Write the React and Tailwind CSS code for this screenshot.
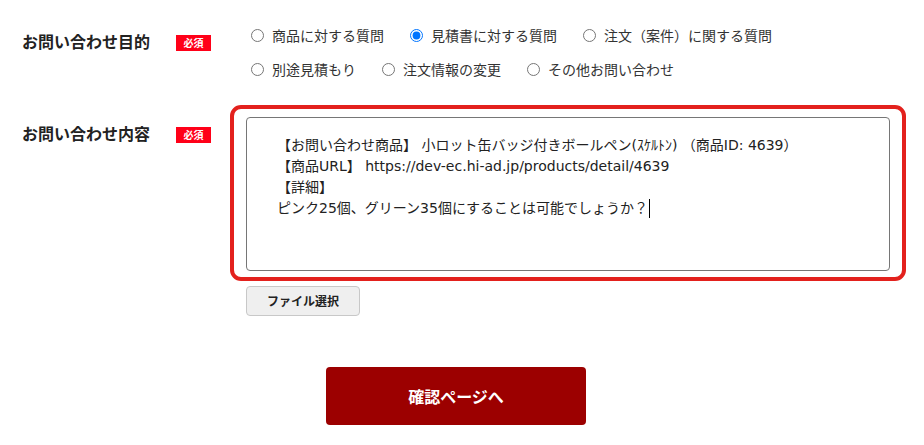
import React from "react";

const font = { fontFamily: '"Noto Sans CJK JP", "Noto Sans", sans-serif' };
const mixFont = { fontFamily: '"DejaVu Sans", "Noto Sans CJK JP", sans-serif' };

function Radio({ label, checked }) {
  return (
    <label className="flex items-center h-[20px]">
      <input
        type="radio"
        name="purpose"
        defaultChecked={checked}
        className="m-0 ml-[5px] w-[13px] h-[13px] accent-[#0075ff]"
      />
      <span className="ml-[8px] text-[14px] leading-[20px] text-[#333333] whitespace-nowrap">{label}</span>
    </label>
  );
}

function Badge() {
  return (
    <div className="w-[35px] h-[16px] bg-[#ff0018] text-white text-[10px] font-bold leading-[16px] flex items-center justify-center">
      必須
    </div>
  );
}

export default function App() {
  return (
    <div className="w-[924px] h-[445px] bg-white pl-[22px] pt-[25px]" style={font}>
      {/* Row 1 */}
      <div className="grid grid-cols-[154px_70px_644px]">
        <div className="pt-[4px] text-[16px] leading-[24px] font-bold text-[#222222]">お問い合わせ目的</div>
        <div className="pt-[10px]"><Badge /></div>
        <div className="flex flex-col gap-[14px]">
          <div className="flex gap-x-[21px]">
            <Radio label="商品に対する質問" />
            <Radio label="見積書に対する質問" checked />
            <Radio label="注文（案件）に関する質問" />
          </div>
          <div className="flex gap-x-[21px]">
            <Radio label="別途見積もり" />
            <Radio label="注文情報の変更" />
            <Radio label="その他お問い合わせ" />
          </div>
        </div>
      </div>

      {/* Row 2 */}
      <div className="grid grid-cols-[154px_70px_644px] mt-[38px]">
        <div className="pt-[4px] text-[16px] leading-[24px] font-bold text-[#222222]">お問い合わせ内容</div>
        <div className="pt-[10px]"><Badge /></div>
        <div className="flex flex-col">
          <div className="relative">
            <div
              className="h-[154px] border border-[#767676] rounded-[4px] pl-[30px] pt-[17px] text-[14px] leading-[21px] text-[#222222] whitespace-pre"
              style={mixFont}
            >
              <div>【お問い合わせ商品】 小ロット缶バッジ付きボールペン(ｽｹﾙﾄﾝ) （商品ID: 4639）</div>
              <div>【商品URL】 https://dev-ec.hi-ad.jp/products/detail/4639</div>
              <div>【詳細】</div>
              <div className="flex items-center">
                <span>ピンク25個、グリーン35個にすることは可能でしょうか？</span>
                <span className="inline-block w-[1px] h-[19px] bg-black ml-[1px]"></span>
              </div>
            </div>
            <div className="absolute top-[-12px] bottom-[-10px] left-[-16px] right-[-16px] border-[4px] border-[#e3211d] rounded-[11px] pointer-events-none"></div>
          </div>
          <div className="mt-[15px]">
            <button className="w-[114px] h-[30px] bg-[#efefef] border border-[#c8c8c8] rounded-[4px] text-[12px] font-bold text-[#222222] flex items-center justify-center">
              ファイル選択
            </button>
          </div>
        </div>
      </div>

      {/* Submit */}
      <div className="mt-[51px] ml-[304px]">
        <button className="w-[260px] h-[58px] bg-[#9c0000] rounded-[4px] text-white text-[16px] font-bold flex items-center justify-center">
          確認ページへ
        </button>
      </div>
    </div>
  );
}
